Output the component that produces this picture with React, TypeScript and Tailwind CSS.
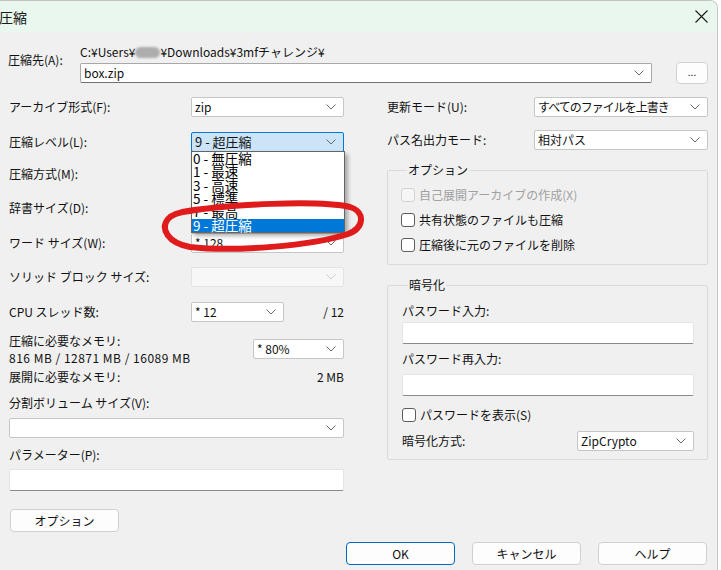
import React from "react";

// Small chevron used by every combo box
const Chevron = ({ light }: { light?: boolean }) => (
  <svg width="10" height="6" viewBox="0 0 10 6" className="shrink-0">
    <path d="M0.5 0.5 L5 5 L9.5 0.5" fill="none" stroke={light ? "#cfcfcf" : "#6a6a6a"} strokeWidth="1" />
  </svg>
);

type ComboProps = {
  text?: React.ReactNode;
  className?: string;
  textClass?: string;
  variant?: "normal" | "active" | "disabled" | "edit";
};

const Combo = ({ text = "", className = "", textClass = "", variant = "normal" }: ComboProps) => {
  const look =
    variant === "active"
      ? "bg-[#cce4f7] border-[#0078d7] text-[13px]"
      : variant === "disabled"
      ? "bg-[#f7f7f7] border-[#e3e3e3]"
      : variant === "edit"
      ? "bg-white border-[#a8a8a8] border-b-[#707070]"
      : "bg-white border-[#c6c6c6]";
  return (
    <div className={`h-[20px] border rounded-[2px] flex items-center justify-between pl-[3px] pr-[7px] ${look} ${className}`}>
      <span className={`leading-[16px] whitespace-nowrap ${textClass}`}>{text}</span>
      <Chevron light={variant === "disabled"} />
    </div>
  );
};

const TextBox = ({ className = "" }: { className?: string }) => (
  <div className={`h-[22px] bg-white border border-[#e4e4e4] border-b-[#8a8a8a] rounded-[2px] ${className}`} />
);

const Check = ({ label, disabled }: { label: string; disabled?: boolean }) => (
  <div className="flex items-center h-[16px] gap-[4px]">
    <span
      className={`w-[14px] h-[14px] rounded-[3px] border ${
        disabled ? "border-[#d2d2d2] bg-[#f6f6f6]" : "border-[#5c5c5c] bg-white"
      }`}
    />
    <span className={`leading-[16px] ${disabled ? "text-[#a0a0a0]" : ""}`}>{label}</span>
  </div>
);

const Button = ({ label, primary, className = "" }: { label: string; primary?: boolean; className?: string }) => (
  <div
    className={`w-[109px] h-[23px] rounded-[4px] border flex items-center justify-center bg-[#fdfdfd] ${
      primary ? "border-[#0067c0]" : "border-[#d0d0d0]"
    } ${className}`}
  >
    {label}
  </div>
);

const Row = ({ label, children, className = "" }: { label: string; children: React.ReactNode; className?: string }) => (
  <div className={`h-[20px] flex items-center justify-between ${className}`}>
    <span className="leading-[16px] whitespace-nowrap">{label}</span>
    {children}
  </div>
);

const levels = ["0 - 無圧縮", "1 - 最速", "3 - 高速", "5 - 標準", "7 - 最高", "9 - 超圧縮"];

export default function App() {
  return (
    <div className="relative w-[721px] h-[570px] bg-white overflow-hidden text-[12px] text-[#111] font-['Noto_Sans_CJK_JP','Noto_Sans',sans-serif]">
      <div className="w-[718px] h-full border-t border-r border-[#c4c4c4] rounded-tr-[8px] bg-[#f0f0f0] flex flex-col overflow-hidden">
        {/* Title bar */}
        <div className="h-[31px] bg-[#eaf7ee] flex items-center justify-between shrink-0">
          <span className="text-[14px] leading-[18px] text-[#1a1a1a] -ml-[1px]">圧縮</span>
          <svg width="13" height="13" viewBox="0 0 13 13" className="mr-[9px]">
            <path d="M0.5 0.5 L12.5 12.5 M12.5 0.5 L0.5 12.5" stroke="#1a1a1a" strokeWidth="1.1" />
          </svg>
        </div>

        {/* Body */}
        <div className="flex-1 pl-[9px] pr-[9px] flex flex-col">
          {/* Destination */}
          <div className="mt-[13px] flex">
            <span className="w-[71px] pt-[7px] leading-[16px] whitespace-nowrap -ml-[1px]">圧縮先(A):</span>
            <div className="flex-1 flex flex-col ml-[1px]">
              <div className="h-[14px] leading-[14px] flex items-center whitespace-nowrap">
                <span>C:¥Users¥</span>
                <span className="inline-block w-[25px] h-[11px] rounded-full bg-[#adadad] blur-[1px]" />
                <span>¥Downloads¥3mfチャレンジ¥</span>
              </div>
              <div className="mt-[4px] h-[20px] flex items-center">
                <Combo text="box.zip" variant="edit" className="flex-1" />
                <div className="ml-[24px] w-[32px] h-[22px] shrink-0 rounded-[4px] border border-[#d0d0d0] bg-[#fdfdfd] flex items-center justify-center text-[10px] leading-[10px] pb-[2px]">
                  ...
                </div>
              </div>
            </div>
          </div>

          {/* Two columns */}
          <div className="mt-[14px] flex">
            {/* Left column */}
            <div className="w-[335px] flex flex-col">
              <Row label="アーカイブ形式(F):">
                <Combo text="zip" className="w-[153px]" />
              </Row>
              <Row label="圧縮レベル(L):" className="mt-[15px]">
                <Combo text="9 - 超圧縮" variant="active" className="w-[153px]" />
              </Row>
              {/* these two combos sit under the open list */}
              <Row label="圧縮方式(M):" className="mt-[12px]">
                <Combo className="w-[153px]" />
              </Row>
              <Row label="辞書サイズ(D):" className="mt-[14px]">
                <Combo className="w-[153px]" />
              </Row>
              <Row label="ワード サイズ(W):" className="mt-[15px]">
                <Combo text="*  128" className="w-[153px]" />
              </Row>
              <Row label="ソリッド ブロック サイズ:" className="mt-[14px]">
                <Combo variant="disabled" className="w-[153px]" />
              </Row>
              <div className="mt-[15px] h-[20px] flex items-center">
                <span className="w-[182px] leading-[16px]">CPU スレッド数:</span>
                <Combo text="*  12" className="w-[93px]" />
                <span className="flex-1 text-right leading-[16px]">/ 12</span>
              </div>
              <div className="mt-[10px] h-[34px] flex justify-between">
                <div className="flex flex-col leading-[17px] whitespace-nowrap">
                  <span>圧縮に必要なメモリ:</span>
                  <span className="tracking-[0.5px]">816 MB / 12871 MB / 16089 MB</span>
                </div>
                <Combo text="*  80%" className="w-[91px] mt-[7px]" />
              </div>
              <div className="mt-[3px] h-[16px] flex justify-between leading-[16px]">
                <span>展開に必要なメモリ:</span>
                <span>2 MB</span>
              </div>
              <span className="mt-[10px] leading-[16px]">分割ボリューム サイズ(V):</span>
              <Combo className="mt-[7px]" />
              <span className="mt-[9px] leading-[16px]">パラメーター(P):</span>
              <TextBox className="mt-[6px]" />
              <Button label="オプション" className="mt-[18px] ml-[1px]" />
            </div>

            {/* Right column */}
            <div className="ml-[43px] w-[321px] flex flex-col">
              <Row label="更新モード(U):">
                <Combo text="すべてのファイルを上書き" textClass="tracking-[-1px]" className="w-[174px]" />
              </Row>
              <Row label="パス名出力モード:" className="mt-[13px]">
                <Combo text="相対パス" className="w-[174px]" />
              </Row>

              <fieldset className="mt-[12px] border border-[#dadada] rounded-[2px] px-[13px] pt-[9px] pb-[11px] flex flex-col gap-[9px]">
                <legend className="ml-[6px] px-[1px] leading-[16px]">オプション</legend>
                <Check label="自己展開アーカイブの作成(X)" disabled />
                <Check label="共有状態のファイルも圧縮" />
                <Check label="圧縮後に元のファイルを削除" />
              </fieldset>

              <fieldset className="mt-[12px] border border-[#dadada] rounded-[2px] pl-[14px] pr-[13px] pt-[10px] pb-[8px] flex flex-col">
                <legend className="ml-[6px] px-[1px] leading-[16px]">暗号化</legend>
                <span className="leading-[16px]">パスワード入力:</span>
                <TextBox className="mt-[3px]" />
                <span className="mt-[7px] leading-[16px]">パスワード再入力:</span>
                <TextBox className="mt-[7px]" />
                <div className="mt-[11px]">
                  <Check label="パスワードを表示(S)" />
                </div>
                <Row label="暗号化方式:" className="mt-[8px]">
                  <Combo text="ZipCrypto" className="w-[117px]" />
                </Row>
              </fieldset>
            </div>
          </div>

          {/* Dialog buttons */}
          <div className="mt-[10px] flex justify-end gap-[17px] mr-[1px]">
            <Button label="OK" primary />
            <Button label="キャンセル" />
            <Button label="ヘルプ" />
          </div>
        </div>
      </div>

      {/* Open dropdown list of 圧縮レベル */}
      <div className="absolute left-[191px] top-[151px] w-[154px] border border-[#646464] bg-white shadow-[3px_3px_4px_rgba(0,0,0,0.3)]">
        {levels.map((lv, i) => (
          <div
            key={lv}
            className={`h-[13.33px] leading-[13.33px] text-[13.5px] pl-[1px] whitespace-nowrap overflow-visible ${
              i === levels.length - 1 ? "bg-[#0078d7] text-white" : "text-black"
            }`}
          >
            {lv}
          </div>
        ))}
      </div>

      {/* Hand-drawn red ellipse */}
      <svg className="absolute inset-0 pointer-events-none" width="721" height="570" viewBox="0 0 721 570">
        <path
          d="M182 212 C230 204 318 200 350 207 C366 212 364 228 348 234 C312 246 232 252 190 247 C168 243 160 229 168 219 C172 214 180 212 190 211"
          fill="none"
          stroke="#e01b1b"
          strokeWidth="6"
          strokeLinecap="round"
        />
      </svg>
    </div>
  );
}
